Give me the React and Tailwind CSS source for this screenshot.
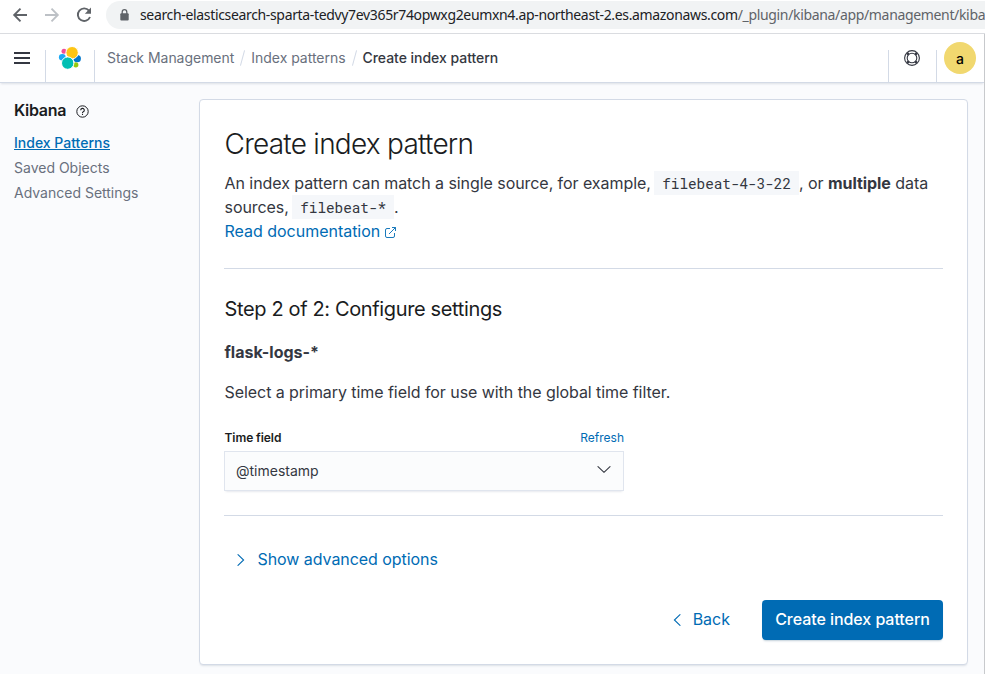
import React from "react";

const Slash = () => <span className="mx-2 mt-px h-4 w-px rotate-[15deg] bg-[#d3dae6]" />;

function BrowserBar() {
  return (
    <div className="flex h-[34px] shrink-0 items-start border-b border-[#dadce0] bg-white">
      <svg className="ml-[12px] mt-[7px] h-4 w-4 shrink-0" viewBox="0 0 16 16" fill="none" stroke="#5f6368" strokeWidth="1.9">
        <path d="M15 8H2.5M8.5 1.7 2.2 8l6.3 6.3" />
      </svg>
      <svg className="ml-[16px] mt-[7px] h-4 w-4 shrink-0" viewBox="0 0 16 16" fill="none" stroke="#bdc1c6" strokeWidth="1.9">
        <path d="M1 8h12.5M7.5 1.7 13.8 8l-6.3 6.3" />
      </svg>
      <svg className="ml-[16px] mt-[7px] h-4 w-4 shrink-0" viewBox="0 0 16 16">
        <path d="M13 3.6A6.3 6.3 0 1 0 14 10" fill="none" stroke="#5f6368" strokeWidth="1.9" />
        <path d="M15 .6v6.2H8.8z" fill="#5f6368" />
      </svg>
      <div className="ml-[14px] mt-px flex h-7 min-w-0 flex-1 items-center overflow-hidden rounded-l-full bg-[#f1f3f4]">
        <svg className="ml-[14px] h-[12px] w-[9px] shrink-0" viewBox="0 0 9 12">
          <path d="M2.2 5V3a2.3 2.3 0 0 1 4.6 0v2" fill="none" stroke="#5f6368" strokeWidth="1.3" />
          <rect x=".3" y="4.3" width="8.4" height="7.2" rx="1" fill="#5f6368" />
        </svg>
        <span className="-mt-px ml-[11px] whitespace-nowrap font-['Noto_Sans',sans-serif] text-[14px] tracking-[-0.34px] text-[#202124]">
          search-elasticsearch-sparta-tedvy7ev365r74opwxg2eumxn4.ap-northeast-2.es.amazonaws.com
          <span className="text-[#5f6368]">/_plugin/kibana/app/management/kiba</span>
        </span>
      </div>
    </div>
  );
}

function Header() {
  return (
    <header className="relative flex h-[49px] shrink-0 border-b border-[#d3dae6] bg-white shadow-[0_2px_2px_-1px_rgba(152,162,179,0.3)]">
      <div className="flex w-[45px] items-center pl-[14px]">
        <svg className="h-3 w-4" viewBox="0 0 16 12" fill="#343741">
          <path d="M0 0h16v2H0zM0 5h16v2H0zM0 10h16v2H0z" />
        </svg>
      </div>
      <div className="mt-4 flex w-[50px] border-x border-[#d3dae6] pl-[12px]">
        <svg className="-mt-[4px] h-6 w-6" viewBox="0 0 24 24">
          <circle cx="6" cy="5.2" r="2.5" fill="#F04E98" />
          <ellipse cx="4.3" cy="11.3" rx="3.4" ry="3.3" fill="#1BA9F5" />
          <ellipse cx="19.2" cy="12.7" rx="3.7" ry="3.6" fill="#07C" />
          <circle cx="17.8" cy="18.8" r="2.6" fill="#93C90E" />
          <circle cx="14.1" cy="6.7" r="6.2" fill="#FEC514" stroke="#fff" strokeWidth="1" />
          <circle cx="9.7" cy="17.1" r="6.2" fill="#00BFB3" stroke="#fff" strokeWidth="1" />
        </svg>
      </div>
      <nav className="-mt-px ml-[12px] flex flex-1 items-center text-[14px] tracking-[-0.03px] text-[#69707d]">
        <span>Stack Management</span>
        <Slash />
        <span>Index patterns</span>
        <Slash />
        <span className="font-medium text-[#343741]">Create index pattern</span>
      </nav>
      <div className="mt-4 flex w-[49px] border-x border-[#d3dae6] pl-[15px]">
        <svg className="h-4 w-4" viewBox="0 0 16 16" fill="none" stroke="#343741">
          <circle cx="8" cy="8" r="7.4" strokeWidth="1.1" />
          <circle cx="8" cy="8" r="4.8" strokeWidth="1.1" />
          <path d="m3.200 3.200 1.500 1.500M12.800 3.200l-1.500 1.500M3.200 12.800l1.500-1.500M12.800 12.800l-1.500-1.500" strokeWidth="2.4" />
        </svg>
      </div>
      <div className="flex w-[47px] items-center pl-[7px]">
        <span className="flex h-8 w-8 items-center justify-center rounded-full bg-[#f1d86f] text-[14px] font-medium text-black">a</span>
      </div>
    </header>
  );
}

function Sidebar() {
  return (
    <aside className="flex w-[199px] shrink-0 flex-col pl-[14px] pt-[17px] text-[14px]">
      <div className="flex h-[20px] items-center gap-[10px]">
        <span className="text-[16px] font-semibold tracking-[-0.3px] text-[#1a1c21]">Kibana</span>
        <svg className="mt-[2px] h-[13px] w-[13px]" viewBox="0 0 13 13" fill="none" stroke="#1a1c21">
          <circle cx="6.500" cy="6.500" r="5.700" />
          <path d="M4.700 5.200a1.800 1.800 0 1 1 2.600 1.600Q6.500 7.200 6.500 8M6.500 8.800v1.100" strokeWidth="1.1" />
        </svg>
      </div>
      <a className="mt-[10px] h-[25px] leading-[25px] font-medium text-[#006bb4] underline">Index Patterns</a>
      <a className="h-[25px] leading-[25px] text-[#69707d]">Saved Objects</a>
      <a className="h-[25px] leading-[25px] text-[#69707d]">Advanced Settings</a>
    </aside>
  );
}

const Code = ({ children }) => (
  <code className="-ml-px inline-block h-6 bg-[#f5f7fa] px-2 font-['Roboto_Mono','DejaVu_Sans_Mono',monospace] text-[14.4px] leading-[25px] tracking-[-0.05px] text-[#343741]">{children}</code>
);

function Panel() {
  return (
    <main className="mt-4 flex h-[566px] w-[769px] flex-col rounded border border-[#d3dae6] bg-white px-6 shadow-[0_2px_2px_-1px_rgba(152,162,179,0.3)]">
      <h1 className="mt-[24px] pl-[0.5px] text-[28px] leading-[40px] font-light tracking-[-0.75px] text-[#1a1c21]">Create index pattern</h1>
      <div className="mt-[7px] pl-[0.5px] text-[16px] leading-6 tracking-[-0.06px] text-[#343741]">
        <div className="flex whitespace-pre">An index pattern can match a single source, for example, <Code>filebeat-4-3-22</Code>, or <b>multiple</b> data</div>
        <div className="flex whitespace-pre">sources, <Code>filebeat-*</Code>.</div>
        <div className="flex items-center tracking-[-0.02px] text-[#006bb4]">
          Read documentation
          <svg className="ml-[5px] mt-[2px] h-[11px] w-[11px]" viewBox="0 0 11 11" fill="none" stroke="#006bb4" strokeWidth=".9">
            <path d="M5 1.5H2a1.5 1.5 0 0 0-1.5 1.5v6A1.5 1.5 0 0 0 2 10.5h6A1.5 1.5 0 0 0 9.500 9V6M7 .5h3.500V4M10.500.5 4 7" />
          </svg>
        </div>
      </div>
      <hr className="mt-[25px] border-[#d3dae6]" />
      <h2 className="mt-[24px] pl-[0.5px] text-[20px] leading-8 tracking-[-0.36px] text-[#1a1c21]">Step 2 of 2: Configure settings</h2>
      <p className="mt-[15px] pl-[0.5px] text-[16px] leading-6 font-bold text-[#343741]">flask-logs-*</p>
      <p className="mt-[16px] pl-[0.5px] text-[16px] leading-6 tracking-[-0.06px] text-[#343741]">Select a primary time field for use with the global time filter.</p>
      <div className="mt-[25px] flex w-[400px] justify-between text-[12px] leading-[18px]">
        <span className="pl-[0.5px] font-semibold tracking-[-0.08px] text-[#1a1c21]">Time field</span>
        <span className="text-[#006bb4]">Refresh</span>
      </div>
      <div className="mt-[4px] flex h-[40px] w-[400px] shrink-0 items-center justify-between border border-[#e0e5ee] bg-[#fbfcfd] pl-[11px] pr-[12px] text-[14px] text-[#343741] shadow-[0_1px_1px_-1px_rgba(152,162,179,0.2),0_3px_2px_-2px_rgba(152,162,179,0.2)]">
        <span className="-mt-px">@timestamp</span>
        <svg className="-mt-[3px] h-[7px] w-[14px]" viewBox="0 0 14 7" fill="none" stroke="#343741" strokeWidth="1.1" strokeLinecap="round">
          <path d="m1 .7 6 5.600 6-5.600" />
        </svg>
      </div>
      <hr className="mt-[24px] border-[#d3dae6]" />
      <div className="mt-[31px] flex h-6 items-center pl-[13px] text-[16px] tracking-[-0.06px] text-[#006bb4]">
        <svg className="mr-[12.5px] mt-[2px] h-[12px] w-[8px]" viewBox="0 0 8 12" fill="none" stroke="#006bb4" strokeWidth="1.1" strokeLinecap="round">
          <path d="m1 .6 5.600 5.400L1 11.400" />
        </svg>
        Show advanced options
      </div>
      <div className="mt-[29px] flex h-10 items-center justify-end text-[16px]">
        <svg className="mr-[12px] h-[12px] w-[8px]" viewBox="0 0 8 12" fill="none" stroke="#006bb4" strokeWidth="1.1" strokeLinecap="round">
          <path d="M7 .6 1.400 6 7 11.400" />
        </svg>
        <span className="-mt-[2px] mr-[32px] text-[#006bb4]">Back</span>
        <button className="h-10 w-[181px] whitespace-nowrap rounded bg-[#006bb4] pb-[2px] font-medium tracking-[-0.06px] text-white shadow-[0_2px_2px_-1px_rgba(54,97,126,0.3)]">Create index pattern</button>
      </div>
    </main>
  );
}

export default function App() {
  return (
    <div className="flex h-[674px] w-[985px] flex-col overflow-hidden bg-[#fafbfd] font-['Inter',sans-serif]">
      <BrowserBar />
      <div className="flex min-h-0 flex-1 flex-col border-r border-[#c8cacd]">
        <Header />
        <div className="flex min-h-0 flex-1">
          <Sidebar />
          <Panel />
        </div>
      </div>
    </div>
  );
}
